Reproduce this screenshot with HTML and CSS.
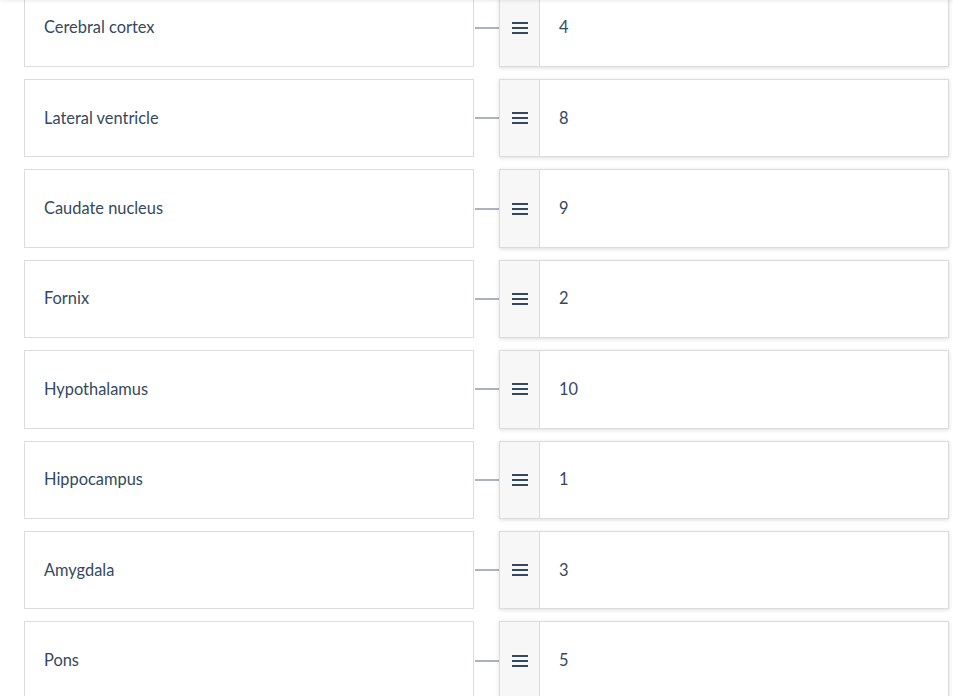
FILE: index.html
```html
<!DOCTYPE html>
<html>
<head>
    <title>Match the structures</title>
    <link rel="stylesheet" href="styles.css">
</head>
<body>
    <div class="topbar"></div>
    <div class="match-list">
        <div class="match-row">
            <div class="term">Cerebral cortex</div>
            <div class="link"></div>
            <div class="answer"><span class="handle"><i></i></span><span class="value">4</span></div>
        </div>
        <div class="match-row">
            <div class="term">Lateral ventricle</div>
            <div class="link"></div>
            <div class="answer"><span class="handle"><i></i></span><span class="value">8</span></div>
        </div>
        <div class="match-row">
            <div class="term">Caudate nucleus</div>
            <div class="link"></div>
            <div class="answer"><span class="handle"><i></i></span><span class="value">9</span></div>
        </div>
        <div class="match-row">
            <div class="term">Fornix</div>
            <div class="link"></div>
            <div class="answer"><span class="handle"><i></i></span><span class="value">2</span></div>
        </div>
        <div class="match-row">
            <div class="term">Hypothalamus</div>
            <div class="link"></div>
            <div class="answer"><span class="handle"><i></i></span><span class="value">10</span></div>
        </div>
        <div class="match-row">
            <div class="term">Hippocampus</div>
            <div class="link"></div>
            <div class="answer"><span class="handle"><i></i></span><span class="value">1</span></div>
        </div>
        <div class="match-row">
            <div class="term">Amygdala</div>
            <div class="link"></div>
            <div class="answer"><span class="handle"><i></i></span><span class="value">3</span></div>
        </div>
        <div class="match-row">
            <div class="term">Pons</div>
            <div class="link"></div>
            <div class="answer"><span class="handle"><i></i></span><span class="value">5</span></div>
        </div>
    </div>
</body>
</html>
```

FILE: styles.css
```css
body {
    margin: 0;
    background: #fff;
    font-family: "Source Sans Pro", Lato, "Liberation Sans", sans-serif;
    color: #34495e;
    font-size: 16.4px;
}

.topbar {
    position: fixed;
    top: -40px;
    left: 0;
    right: 0;
    height: 40px;
    background: #fff;
    box-shadow: 0 0 5px rgba(0,0,0,0.12);
    z-index: 2;
}

.match-list {
    margin-top: -11.4px;
    padding-left: 24px;
    display: flex;
    flex-direction: column;
    gap: 12px;
}

.match-row {
    display: grid;
    grid-template-columns: 450px 25px 450px;
    height: 78.4px;
}

.term {
    border: 1px solid #dcdcdc;
    display: flex;
    align-items: center;
    padding-left: 19px;
    padding-bottom: 2px;
}

.link {
    display: flex;
    align-items: center;
}

.link::before {
    content: "";
    display: block;
    width: 100%;
    margin-left: 1px;
    height: 2px;
    background: #a9b4bd;
}

.answer {
    display: flex;
    border: 1px solid #dcdcdc;
    box-shadow: 0 1px 4px rgba(0,0,0,0.14);
    background: #fff;
}

.handle {
    width: 39px;
    background: #f7f7f7;
    border-right: 1px solid #dcdcdc;
    display: flex;
    align-items: center;
    justify-content: center;
}

.handle i {
    display: block;
    width: 16px;
    height: 2px;
    background: #34495e;
    box-shadow: 0 -5px 0 #34495e, 0 5px 0 #34495e;
}

.value {
    display: flex;
    align-items: center;
    padding-left: 19px;
    padding-bottom: 2px;
}
```
